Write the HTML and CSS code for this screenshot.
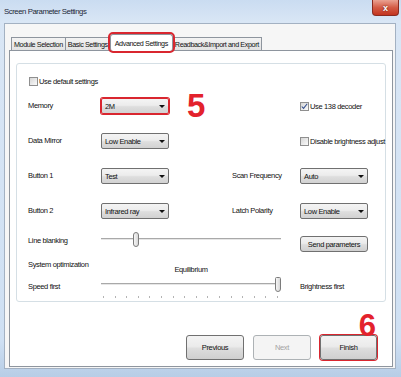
FILE: index.html
```html
<!DOCTYPE html>
<html lang="en">

<head>
    <meta charset="UTF-8">
    <title>Screen Parameter Settings</title>
    <link rel="stylesheet" href="styles.css">
</head>

<body>

    <div class="titlebar">
        <span class="title">Screen Parameter Settings</span>
        <span class="close">x</span>
    </div>

    <div class="client">
        <div class="tabs">
            <div class="tab">Module Selection</div>
            <div class="tab">Basic Settings</div>
            <div class="tab active">Advanced Settings</div>
            <div class="tab">Readback&amp;Import and Export</div>
        </div>

        <div class="panel">
            <div class="group">
                <div class="row row-top">
                    <label class="check"><span class="box"></span>Use default settings</label>
                </div>

                <div class="row">
                    <span class="label">Memory</span>
                    <div class="combo marked">2M</div>
                    <span class="step">5</span>
                    <span></span>
                    <label class="check"><span class="box"><svg viewBox="0 0 9 9" width="7" height="7"><path d="M1 4.5 L3.3 7 L8 1" fill="none" stroke="#34508f" stroke-width="1.4"/></svg></span>Use 138 decoder</label>
                </div>

                <div class="row">
                    <span class="label">Data Mirror</span>
                    <div class="combo">Low Enable</div>
                    <span></span>
                    <span></span>
                    <label class="check"><span class="box"></span>Disable brightness adjust</label>
                </div>

                <div class="row">
                    <span class="label">Button 1</span>
                    <div class="combo">Test</div>
                    <span></span>
                    <span class="label">Scan Frequency</span>
                    <div class="combo">Auto</div>
                </div>

                <div class="row row-last">
                    <span class="label">Button 2</span>
                    <div class="combo">Infrared ray</div>
                    <span></span>
                    <span class="label">Latch Polarity</span>
                    <div class="combo">Low Enable</div>
                </div>

                <div class="row row-slider">
                    <span class="label">Line blanking</span>
                    <div class="slider">
                        <div class="track"></div>
                        <div class="thumb" style="left: 18%"></div>
                    </div>
                    <button class="btn btn-small">Send parameters</button>
                </div>

                <div class="row row-caption">
                    <span class="label">System optimization</span>
                    <span class="caption">Equilibrium</span>
                </div>

                <div class="row row-slider row-speed">
                    <span class="label">Speed first</span>
                    <div class="slider">
                        <div class="track"></div>
                        <div class="ticks">
                            <i></i><i></i><i></i><i></i><i></i><i></i><i></i><i></i>
                            <i></i><i></i><i></i><i></i><i></i><i></i><i></i><i></i>
                        </div>
                        <div class="thumb pointed" style="left: 96.5%"></div>
                    </div>
                    <span class="label">Brightness first</span>
                </div>
            </div>

            <div class="actions">
                <button class="btn">Previous</button>
                <button class="btn" disabled>Next</button>
                <button class="btn marked finish">Finish<span class="step step-finish">6</span></button>
            </div>
        </div>
    </div>

</body>

</html>
```

FILE: styles.css
```css
* {
    box-sizing: border-box;
}

body {
    margin: 0;
    width: 401px;
    height: 377px;
    overflow: hidden;
    background: linear-gradient(#cadcf1, #d9e6f5 22px, #cfe0f3 340px, #b7cde6);
    font-family: "Liberation Sans", Arial, sans-serif;
    font-size: 7.5px;
    letter-spacing: -0.35px;
    color: #111;
}

.titlebar {
    height: 23px;
    display: flex;
    justify-content: space-between;
    align-items: flex-start;
    padding-left: 4px;
}

.title {
    margin-top: 7px;
    font-size: 7.8px;
    letter-spacing: -0.45px;
    color: #1e2838;
}

.close {
    width: 27px;
    height: 16px;
    margin-right: 2px;
    border: 1px solid #8a2b20;
    border-top: none;
    border-radius: 0 0 4px 4px;
    background: linear-gradient(#eaa292, #d45c46 50%, #c3341f);
    color: #fff;
    font: bold 9px "Liberation Sans", sans-serif;
    letter-spacing: 0;
    text-shadow: 0 0 2px #5a1008;
    display: flex;
    justify-content: center;
    align-items: center;
}

.client {
    height: 346px;
    margin: 0 5px 0 4px;
    border: 1px solid #a3b1c2;
    background: #f6f6f6;
    padding: 13px 2px 0 4px;
}

.tabs {
    display: flex;
    align-items: flex-end;
    height: 13px;
    padding-left: 2px;
    position: relative;
    z-index: 1;
    font-size: 7.2px;
    letter-spacing: -0.4px;
}

.tab {
    height: 13px;
    padding: 0 2px;
    margin-right: -1px;
    border: 1px solid #8e959e;
    border-bottom: none;
    background: linear-gradient(#f3f3f3, #e2e2e2);
    display: flex;
    align-items: center;
    white-space: nowrap;
}

.tab.active {
    height: 17px;
    margin-bottom: -1px;
    padding: 0 4px;
    background: #fff;
    border-radius: 3px;
    outline: 2px solid #d9262f;
    position: relative;
}

.panel {
    height: 317px;
    border: 1px solid #8e959e;
    background: #fff;
    padding: 12px 6px 0;
}

.group {
    height: 239px;
    border: 1px solid #d5dfe5;
    border-radius: 3px;
    padding: 10px 0 0 11px;
}

.row {
    display: grid;
    grid-template-columns: 73px 68px 63px 68px 68px;
    align-items: center;
    height: 16px;
    margin-bottom: 19px;
    white-space: nowrap;
}

.row-top {
    height: 14px;
    margin-bottom: 10px;
}

.row-last {
    margin-bottom: 12px;
}

.label {
    line-height: 10px;
}

.check {
    display: flex;
    align-items: center;
    gap: 1px;
}

.row-top .check {
    margin-left: 1px;
}

.box {
    flex: none;
    width: 9px;
    height: 9px;
    border: 1px solid #8f8f8f;
    background: linear-gradient(135deg, #d6d6d6, #fbfbfb);
    display: flex;
    justify-content: center;
    align-items: center;
}

.combo {
    position: relative;
    height: 16px;
    padding-left: 3px;
    border: 1px solid #707070;
    border-radius: 2px;
    background: linear-gradient(#f4f4f4, #ececec 45%, #dedede 55%, #d2d2d2);
    display: flex;
    align-items: center;
}

.combo::after {
    content: "";
    position: absolute;
    right: 3px;
    top: 6px;
    border-left: 3px solid transparent;
    border-right: 3px solid transparent;
    border-top: 3px solid #111;
}

.marked {
    border-color: #d9262f;
    box-shadow: 0 0 0 1px #d9262f;
}

.step {
    padding-left: 18px;
    font: bold 33px "Liberation Sans", sans-serif;
    letter-spacing: 0;
    line-height: 16px;
    color: #e3222c;
}

/* sliders */
.row-slider {
    height: 21px;
    margin-bottom: 0;
    align-items: start;
}

.row-slider .label {
    margin-top: 5px;
}

.slider {
    grid-column: 2 / 5;
    position: relative;
    height: 17px;
    margin-right: 19px;
}

.track {
    position: absolute;
    left: 0;
    right: 0;
    top: 7px;
    height: 2px;
    border-top: 1px solid #a9a9a9;
    border-bottom: 1px solid #e6e6e6;
}

.thumb {
    position: absolute;
    top: 1px;
    width: 6px;
    height: 15px;
    border: 1px solid #7c7c7c;
    border-radius: 3px;
    background: linear-gradient(90deg, #f6f6f6, #d8d8d8);
}

.thumb.pointed {
    top: 2px;
    border-radius: 2px 2px 4px 4px;
}

.ticks {
    position: absolute;
    left: 2px;
    right: 3px;
    top: 21px;
    display: flex;
    justify-content: space-between;
}

.ticks i {
    width: 1px;
    height: 2px;
    background: #b3b3b3;
}

.row-caption {
    height: 23px;
    margin-bottom: 0;
    align-items: start;
}

.row-caption .label {
    margin-top: 8px;
}

.caption {
    grid-column: 2 / 5;
    margin: 13px 19px 0 0;
    text-align: center;
    line-height: 10px;
}

.row-speed {
    height: 24px;
}

.row-speed .slider {
    height: 24px;
}

.row-speed .track {
    top: 8px;
}

.row-speed .label {
    margin-top: 7px;
}

/* buttons */
.btn {
    width: 58px;
    height: 25px;
    padding: 0;
    border: 1px solid #707070;
    border-radius: 3px;
    background: linear-gradient(#f3f3f3, #ebebeb 45%, #dddddd 55%, #cfcfcf);
    font: inherit;
    letter-spacing: inherit;
    color: inherit;
}

.btn:disabled {
    border-color: #adb2b5;
    background: #f4f4f4;
    color: #a3a3a3;
}

.btn-small {
    width: 68px;
    height: 16px;
    margin-top: 5px;
}

.actions {
    display: flex;
    justify-content: flex-end;
    gap: 9px;
    margin-top: 33px;
    padding-right: 9px;
}

.finish {
    position: relative;
    width: 57px;
}

.step-finish {
    position: absolute;
    right: 0;
    bottom: calc(100% - 5px);
    padding: 0;
    font-size: 31px;
    line-height: 31px;
}
```
